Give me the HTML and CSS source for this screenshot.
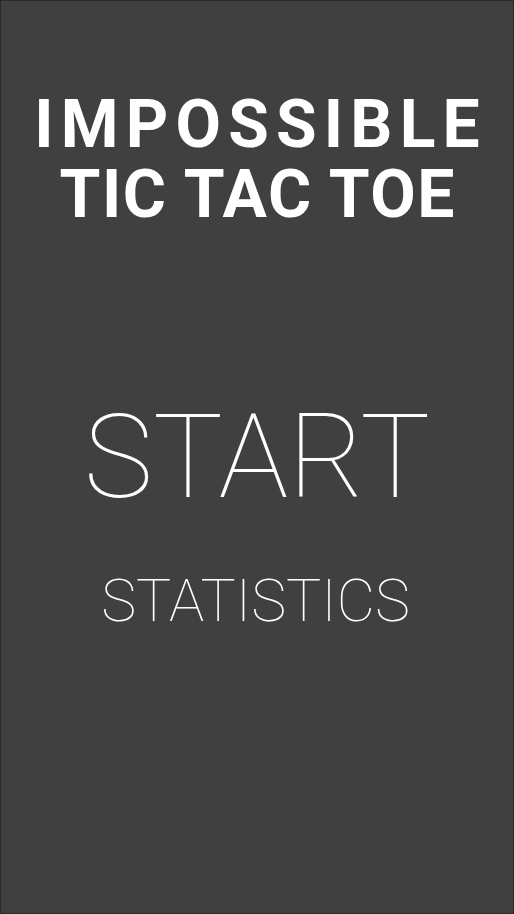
FILE: index.html
```html
<!DOCTYPE html>
<html>
<head>
<meta charset="utf-8">
<link rel="stylesheet" href="styles.css">
</head>
<body>
<main class="screen">
  <h1 class="title">
    <span class="title-line title-line--first">IMPOSSIBLE</span>
    <span class="title-line title-line--second">TIC TAC TOE</span>
  </h1>
  <nav class="menu">
    <button class="menu-item menu-item--start">START</button>
    <button class="menu-item menu-item--stats">STATISTICS</button>
  </nav>
</main>
</body>
</html>
```
FILE: styles.css
```css
html, body {
  margin: 0;
  padding: 0;
  background: #3f3f3f;
}
.screen {
  box-sizing: border-box;
  width: 514px;
  height: 914px;
  border: 1px solid #2a2a2a;
  background: #404040;
  display: flex;
  flex-direction: column;
  align-items: center;
  padding-top: 89px;
  font-family: Roboto, "Liberation Sans", sans-serif;
  color: #ffffff;
}
.title {
  margin: 0;
  display: flex;
  flex-direction: column;
  align-items: center;
  font-weight: 700;
  font-size: 66px;
  line-height: 70px;
}
.title-line--first {
  letter-spacing: 7.2px;
  margin-right: -7.2px;
}
.title-line--second {
  letter-spacing: 1.5px;
  margin-right: -1.5px;
}
.menu {
  margin-top: 168px;
  display: flex;
  flex-direction: column;
  align-items: center;
  gap: 55px;
}
.menu-item {
  background: none;
  border: 0;
  padding: 0;
  color: #ffffff;
  font-family: Roboto, "Liberation Sans", sans-serif;
  font-weight: 100;
  cursor: pointer;
}
.menu-item--start {
  font-size: 117px;
  line-height: 118px;
}
.menu-item--stats {
  font-size: 59px;
  line-height: 59px;
  margin-left: -3px;
}
```
